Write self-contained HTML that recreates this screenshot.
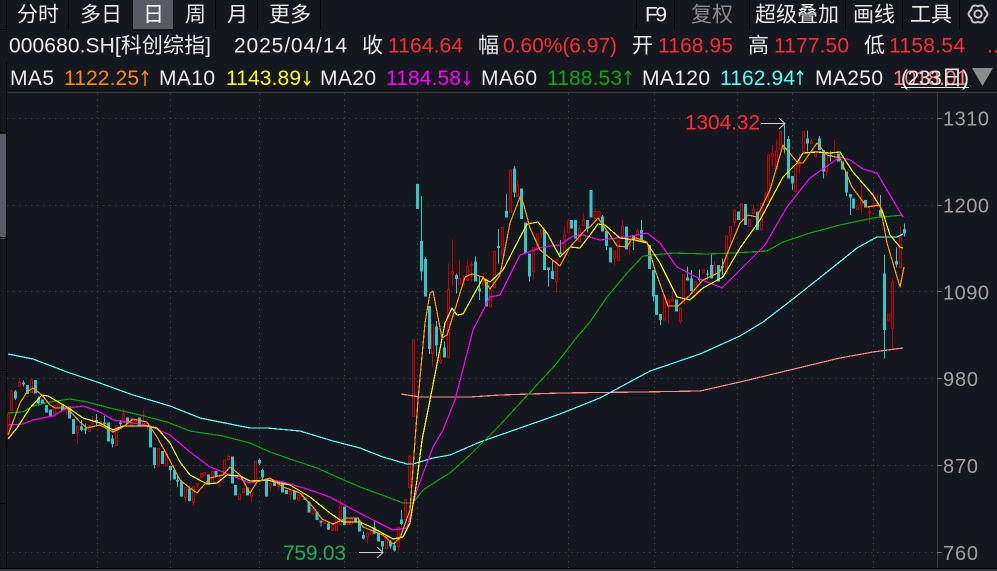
<!DOCTYPE html>
<html lang="zh"><head><meta charset="utf-8"><title>000680.SH</title>
<style>
html,body{margin:0;padding:0;background:#14171e;width:997px;height:571px;overflow:hidden}
svg{display:block;position:absolute;left:0;top:0}
text{font-family:"Liberation Sans","Noto Sans CJK SC",sans-serif;white-space:pre}
.c{font-family:"Liberation Sans","Noto Sans CJK SC",sans-serif;font-size:21px}
.n{font-size:21px}
.w{fill:#ececec}.r{fill:#ff2b36}
.a{fill:#a0a0a0;font-size:20px}
.tw{stroke:#33c6c9;stroke-width:3;fill:none}
.tb{stroke:#33c6c9;stroke-width:9;fill:none}
.rw{stroke:#c80000;stroke-width:3;fill:none}
.rb{stroke:#c80000;stroke-width:3;fill:#14171e}
.m{fill:none;stroke-width:1.2;stroke-linejoin:round;shape-rendering:crispEdges}
</style></head><body>
<svg width="997" height="571" viewBox="0 0 997 571" xmlns="http://www.w3.org/2000/svg">
<rect width="997" height="571" fill="#14171e"/>
<!-- toolbar -->
<rect x="133" y="0" width="40" height="29" fill="#5a5a66"/>
<g shape-rendering="crispEdges" stroke="#000" fill="none">
<path d="M6.5 0V29M0 29.5H7M68.5 0V29M132.5 0V29M173.5 0V29M215.5 0V29M257.5 0V29M320.5 0V29M636.5 0V29M674.5 0V29M749.5 0V29M845.5 0V29M902.5 0V29M959.5 0V29"/>
<path d="M6.5 62V568M0 132.5H6M0 237.5H6M0 370.5H6M0 503.5H6" />
<path d="M0 568.5H997"/>
</g>
<rect x="0" y="134" width="6" height="103" fill="#5a5a66"/>
<rect x="0" y="238" width="6" height="1" fill="#444"/>
<rect x="0" y="569" width="997" height="2" fill="#33363c"/>
<rect x="7" y="92" width="990" height="1" fill="#3c3c3e"/>
<rect x="937" y="93" width="1" height="475" fill="#3c3c3e"/>
<!-- grid -->
<g stroke="#3f4247" stroke-dasharray="1.5 4.5" fill="none" shape-rendering="crispEdges">
<path d="M7 118.5H937M7 205.5H937M7 291.5H937M7 378.5H937M7 465.5H937M7 552.5H937"/>
<path d="M97.5 93V568M170.5 93V568M259.5 93V568M344.5 93V568M417.5 93V568M568.5 93V568M654.5 93V568M737.5 93V568M792.5 93V568M873.5 93V568"/>
</g>
<path d="M937 118.5H942M937 205.5H942M937 291.5H942M937 378.5H942M937 465.5H942M937 552.5H942" stroke="#777" fill="none" shape-rendering="crispEdges"/>
<!-- toolbar text -->
<g class="c" fill="#ececec">
<text x="17" y="21.5" textLength="42">分时</text>
<text x="80" y="21.5" textLength="42">多日</text>
<text x="143" y="21.5" textLength="21" fill="#fff">日</text>
<text x="185" y="21.5" textLength="21">周</text>
<text x="227" y="21.5" textLength="21">月</text>
<text x="269" y="21.5" textLength="42">更多</text>
<text x="645" y="21.5" textLength="22">F9</text>
<text x="691" y="21.5" textLength="42" fill="#8a8a8a">复权</text>
<text x="755" y="21.5" textLength="84">超级叠加</text>
<text x="853" y="21.5" textLength="42">画线</text>
<text x="910" y="21.5" textLength="42">工具</text>
</g>
<path d="M978 6.2Q984 3.6 984.8 10.1 990 14 984.8 17.9 984 24.4 978 21.8 972 24.4 971.2 17.9 966 14 971.2 10.1 972 3.6 978 6.2Z" fill="none" stroke="#c4c4c4" stroke-width="2" stroke-linejoin="round"/>
<circle cx="978" cy="14" r="3.6" fill="none" stroke="#c4c4c4" stroke-width="2"/>
<!-- info row -->
<g class="n">
<text class="w" x="9" y="52.5" textLength="202">000680.SH[科创综指]</text>
<text class="w" x="234" y="52.5" textLength="113">2025/04/14</text>
<text class="w" x="362" y="52.5" textLength="21">收</text>
<text class="r" x="388" y="52.5" textLength="75">1164.64</text>
<text class="w" x="478" y="52.5" textLength="21">幅</text>
<text class="r" x="503" y="52.5" textLength="114">0.60%(6.97)</text>
<text class="w" x="632" y="52.5" textLength="21">开</text>
<text class="r" x="658" y="52.5" textLength="75">1168.95</text>
<text class="w" x="748" y="52.5" textLength="21">高</text>
<text class="r" x="774" y="52.5" textLength="75">1177.50</text>
<text class="w" x="864" y="52.5" textLength="21">低</text>
<text class="r" x="889" y="52.5" textLength="76">1158.54</text>
<text class="r" x="987" y="52.5">..</text>
</g>
<!-- MA row -->
<g class="n">
<text class="w" x="10" y="85" textLength="44">MA5</text>
<text x="64" y="85" textLength="75" fill="#ff8c00">1122.25</text>
<text class="w" x="159" y="85" textLength="56">MA10</text>
<text x="226" y="85" textLength="75" fill="#ffff00">1143.89</text>
<text class="w" x="320" y="85" textLength="56">MA20</text>
<text x="386" y="85" textLength="75" fill="#ff00ff">1184.58</text>
<text class="w" x="481" y="85" textLength="56">MA60</text>
<text x="547" y="85" textLength="75" fill="#0fa80f">1188.53</text>
<text class="w" x="642" y="85" textLength="68">MA120</text>
<text x="720" y="85" textLength="75" fill="#55ffff">1162.94</text>
<text class="w" x="815" y="85" textLength="68">MA250</text>
<text x="893" y="85" textLength="75" fill="#ff8080">1018.01</text>
<text x="901" y="85" textLength="68" fill="#e8e8e8">(233日)</text>
</g>
<rect x="901" y="87" width="68" height="1" fill="#e8e8e8"/>
<g fill="none" stroke-width="1.4">
<path d="M145 86V71M142 75L145 71 148 75" stroke="#ff8c00"/>
<path d="M307 71V85M304 81L307 85 310 81" stroke="#ffff00"/>
<path d="M467 71V85M464 81L467 85 470 81" stroke="#ff00ff"/>
<path d="M628 85V71M625 75L628 71 631 75" stroke="#0fa80f"/>
<path d="M800 85V71M797 75L800 71 803 75" stroke="#55ffff"/>
</g>
<path d="M972 68H993L982.5 86Z" fill="#8c8c8c"/>
<!-- axis labels -->
<g class="a">
<text x="943" y="125.5" textLength="46">1310</text>
<text x="943" y="212.5" textLength="46">1200</text>
<text x="943" y="299.5" textLength="46">1090</text>
<text x="943" y="386" textLength="35">980</text>
<text x="943" y="473" textLength="35">870</text>
<text x="943" y="560" textLength="35">760</text>
</g>
<!-- candles -->
<g shape-rendering="crispEdges">
<g transform="translate(0 340) scale(.33333)">
<path class="tw" d="M46 150V180M70 122V140M115 170V198M244 240V275M256 250V282M290 222V260M314 228V260M338 285V322M362 240V258M463 375V385M511 390V422M532 405V440M568 440V485"/>
<path class="tb" d="M46 155V175M70 128V133M82 135V162M106 120V160M115 175V190M127 178V190M139 195V218M151 208V228M187 195V212M208 200V235M220 237V282M244 260V270M256 265V272M290 240V248M314 248V252M326 248V305M338 295V312M362 248V252M382 232V250M418 232V258M451 258V323M463 323V375M487 333V372M511 378V390M523 390V418M532 420V425M544 425V470M568 445V483M625 403V430M648 393V408M697 350V430M706 435V467M742 442V467"/>
<path class="rw" d="M34 148V153M58 120V128M175 183V190M199 210V225M232 278V312M278 228V245M370 205V222M430 210V245M442 258V272M556 472V488M580 488V497M592 435V443M660 425V440M685 343V350"/>
<path class="rb" d="M23 220H29V280H23ZM31 153H37V212H31ZM55 128H61V140H55ZM91 120H97V158H91ZM160 197H166V228H160ZM172 190H178V202H172ZM196 200H202V210H196ZM229 258H235V278H229ZM265 258H271V275H265ZM275 245H281V252H275ZM299 245H305V258H299ZM347 258H353V316H347ZM367 222H373V248H367ZM391 235H397V255H391ZM403 238H409V245H403ZM427 245H433V255H427ZM439 250H445V258H439ZM472 325H478V378H472ZM496 342H502V378H496ZM553 442H559V472H553ZM577 440H583V488H577ZM589 430H595V435H589ZM601 400H607V412H601ZM610 398H616V405H610ZM634 395H640V430H634ZM657 405H663V425H657ZM670 360H676V405H670ZM682 350H688V358H682ZM715 462H721V478H715ZM727 445H733V458H727Z"/>
</g>
<g transform="translate(250 400) scale(.33333)">
<path class="tw" d="M29 175V195M37 205V238M133 270V300M213 362V380M235 365V390M341 395V418M373 365V402M397 423V455M421 420V445M433 430V455M454 330V375"/>
<path class="tb" d="M29 180V190M37 210V232M49 235V290M73 245V258M97 250V278M109 270V282M133 275V298M165 292V300M177 305V337M201 335V360M213 362V368M235 370V388M283 320V375M317 355V365M329 362V395M341 405V415M373 383V400M385 400V425M397 423V440M421 425V440M433 437V452M454 358V372"/>
<path class="rw" d="M5 290V305M61 258V275M85 258V268M121 280V298M189 325V345M223 358V372M271 297V315M353 410V430M365 385V392M409 405V420M445 440V455"/>
<path class="rb" d="M2 280H8V288H2ZM14 185H20V243H14ZM58 250H64V258H58ZM82 250H88V258H82ZM118 275H124V283H118ZM142 285H148V302H142ZM154 280H160V290H154ZM186 325H192V340H186ZM220 360H226V370H220ZM244 375H250V392H244ZM256 353H262V392H256ZM268 315H274V373H268ZM292 360H298V373H292ZM302 355H308V372H302ZM350 398H356V410H350ZM362 392H368V403H362ZM406 420H412V445H406ZM442 382H448V440H442ZM463 298H469V358H463ZM475 168H481V262H475ZM487 -50H493V50H487Z"/>
</g>
<g transform="translate(390 160) scale(.33333)">
<path class="tw" d="M82 72V147M94 108V362M106 292V410M118 438V582M139 483V590M163 545V593M199 340V400M256 290V365M268 350V420M325 207V310M349 102V172M373 18V113M418 280V365M475 322V380M487 298V357M511 240V283M592 180V218"/>
<path class="tb" d="M82 72V147M94 243V335M106 297V410M118 438V567M139 500V557M163 563V593M199 345V357M256 305V365M268 385V395M290 365V440M325 258V264M349 153V172M373 25V97M394 85V177M406 187V280M418 280V350M463 210V330M475 322V330M487 333V357M511 277V283M544 180V205M556 180V235M592 180V205"/>
<path class="rw" d="M128 580V620M151 575V612M175 310V388M187 238V378M208 300V355M220 345V378M232 300V320M244 305V365M280 337V365M382 60V75M430 335V358M454 220V235M499 365V398M523 197V225M535 178V183M568 195V205M580 160V180"/>
<path class="rb" d="M67 540H73V770H67ZM125 493H131V580H125ZM148 600H154V607H148ZM172 388H178V593H172ZM184 335H190V342H184ZM205 355H211V372H205ZM217 372H223V376H217ZM229 320H235V362H229ZM241 313H247V316H241ZM277 365H283V375H277ZM298 390H304V440H298ZM310 275H316V382H310ZM334 203H340V285H334ZM358 30H364V157H358ZM379 75H385V110H379ZM427 262H433V335H427ZM439 222H445V265H439ZM451 210H457V220H451ZM496 300H502V365H496ZM520 225H526V280H520ZM532 183H538V218H532ZM565 205H571V245H565ZM577 180H583V197H577Z"/>
</g>
<g transform="translate(590 180) scale(.33333)">
<path class="tw" d="M37 105V155M49 153V210M130 165V210M154 120V185M190 270V365M211 402V435M292 260V302M304 270V333M328 268V305M352 270V298M364 225V295M397 235V285"/>
<path class="tb" d="M3 30V112M37 110V155M49 153V198M61 203V247M109 140V208M130 165V180M154 150V185M178 195V267M190 270V350M199 345V405M211 402V420M259 358V395M292 292V302M304 295V333M328 295V300M352 280V284M364 255V295M385 255V305M397 258V262M445 95V120M466 72V135M502 95V150"/>
<path class="rw" d="M15 85V95M73 236V257M97 120V140M118 198V225M142 145V153M235 380V430M247 335V358M271 425V430M373 243V255M421 165V190M433 128V140M490 75V87M526 35V48"/>
<path class="rb" d="M12 95H18V115H12ZM24 95H30V115H24ZM70 213H76V236H70ZM82 183H88V242H82ZM94 140H100V170H94ZM115 180H121V198H115ZM139 153H145V185H139ZM220 350H226V420H220ZM232 358H238V380H232ZM244 358H250V365H244ZM268 385H274V425H268ZM277 283H283V370H277ZM313 305H319V345H313ZM337 270H343V277H337ZM370 255H376V285H370ZM406 168H412V280H406ZM418 140H424V165H418ZM430 90H436V128H430ZM451 72H457V125H451ZM475 118H481V140H475ZM487 87H493V100H487ZM511 70H517V150H511ZM523 48H529V65H523Z"/>
</g>
<g transform="translate(740 110) scale(.33333)">
<path class="tw" d="M133 40V130M145 78V205M157 198V240M202 62V125M238 78V120M250 120V205M271 125V155M319 185V258M331 252V315M340 265V295M376 270V292M421 255V320M433 435V745M469 412V473M493 340V380"/>
<path class="tb" d="M133 112V118M145 87V205M157 198V220M202 85V100M238 85V120M250 120V185M271 135V140M295 130V155M307 155V178M319 185V248M331 252V263M340 265V295M376 270V292M421 300V320M433 490V660M469 453V463M493 357V370"/>
<path class="rw" d="M85 255V275M97 105V170M109 90V125M178 130V190M214 85V95M259 185V200M283 90V145M364 225V310M388 285V340M400 245V285M412 250V280M457 503V715M481 348V383"/>
<path class="rb" d="M82 135H88V255H82ZM94 130H100V140H94ZM106 125H112V180H106ZM118 65H124V118H118ZM164 165H170V245H164ZM175 158H181V165H175ZM187 65H193V125H187ZM211 95H217V100H211ZM223 125H229V140H223ZM256 130H262V185H256ZM349 288H355V298H349ZM361 270H367V285H361ZM385 305H391V309H385ZM397 285H403V290H397ZM409 280H415V290H409ZM442 612H448V632H442ZM454 517H460V655H454ZM478 383H484V472H478Z"/>
</g>
</g>
<!-- MA lines -->
<polyline class="m" stroke="#ff8a8a" points="401,394 420,397 470,397 500,395 560,393 640,392 700,391 740,382 794,369 840,358 873,352 903,348"/>
<polyline class="m" stroke="#5cffff" points="8,354 33,359 67,372 97,382 133,395 170,406 200,418 250,428 267,428 300,431 333,441 360,448 383,457 407,464 413,464 433,458 450,455 480,442 520,428 560,414 600,398 650,371 700,354 740,336 763,322 793,299 827,272 857,248 877,237 897,237 903,234"/>
<polyline class="m" stroke="#08a808" points="8,413 23,412 33,406 50,402 70,399 87,402 110,408 140,415 167,422 190,431 223,436 250,443 270,452 293,460 317,468 337,477 360,487 390,498 403,503 413,503 423,490 440,479 450,473 470,455 500,425 523,400 557,363 577,337 590,322 607,297 627,273 643,256 673,253 707,254 733,253 767,251 783,242 810,233 840,225 873,218 903,215"/>
<polyline class="m" stroke="#ff00ff" points="8,425 23,424 33,420 53,416 67,408 83,406 100,412 113,420 133,423 150,426 170,435 190,452 210,467 233,476 250,483 267,479 283,482 307,489 330,497 350,508 377,522 393,530 407,528 417,490 433,447 443,430 455,400 473,330 490,297 500,295 520,255 543,247 560,245 573,236 583,235 600,240 627,237 647,233 660,243 677,267 700,279 722,288 737,273 757,253 765,245 787,207 810,178 840,157 850,160 863,169 877,173 887,190 903,217"/>
<polyline class="m" stroke="#ffff00" points="8,439 17,428 30,408 42,395 48,396 67,407 83,418 100,423 113,430 123,426 147,426 157,428 170,443 180,462 190,475 207,484 217,483 227,475 240,476 250,481 267,480 290,485 310,497 330,513 343,522 360,522 373,528 393,539 403,537 410,523 417,480 422,440 430,400 445,323 452,308 457,315 463,314 483,278 490,282 503,270 515,247 527,224 538,222 547,233 560,257 570,247 580,248 590,235 598,224 605,225 620,238 635,240 647,243 660,263 677,297 690,300 703,288 723,277 740,248 760,220 783,177 797,163 803,153 817,152 830,153 840,152 853,172 873,195 882,210 890,235 900,247 903,248"/>
<polyline class="m" stroke="#ff9a00" points="8,435 20,403 27,392 33,388 42,395 50,405 55,408 67,408 80,422 87,428 100,425 113,432 123,427 133,419 147,422 157,437 167,455 180,480 190,488 197,493 210,478 223,475 230,467 240,475 250,493 257,482 270,478 283,487 300,493 313,507 322,519 333,524 347,518 358,518 363,527 383,535 393,544 400,538 410,510 416,427 418,400 425,323 430,293 433,291 442,338 447,335 457,303 465,277 472,274 483,277 490,289 500,275 510,223 520,197 523,202 530,228 540,250 560,266 570,247 587,228 590,227 598,218 610,235 617,246 627,247 633,237 647,242 655,270 668,306 678,306 690,295 703,280 720,272 730,247 740,223 748,215 757,217 770,190 783,145 798,163 803,163 817,143 827,155 840,158 852,187 867,207 880,205 887,243 900,287 904,267"/>
<!-- markers -->
<text x="685" y="129.5" class="n r" textLength="75">1304.32</text>
<path d="M761 123.5H785M779 118L785 123.5 779 129" fill="none" stroke="#cfcfcf"/>
<text x="283" y="560" class="n" textLength="63" fill="#1fae5a">759.03</text>
<path d="M359 552.5H383M377 547L383 552.5 377 558" fill="none" stroke="#cfcfcf"/>
</svg>
</body></html>
